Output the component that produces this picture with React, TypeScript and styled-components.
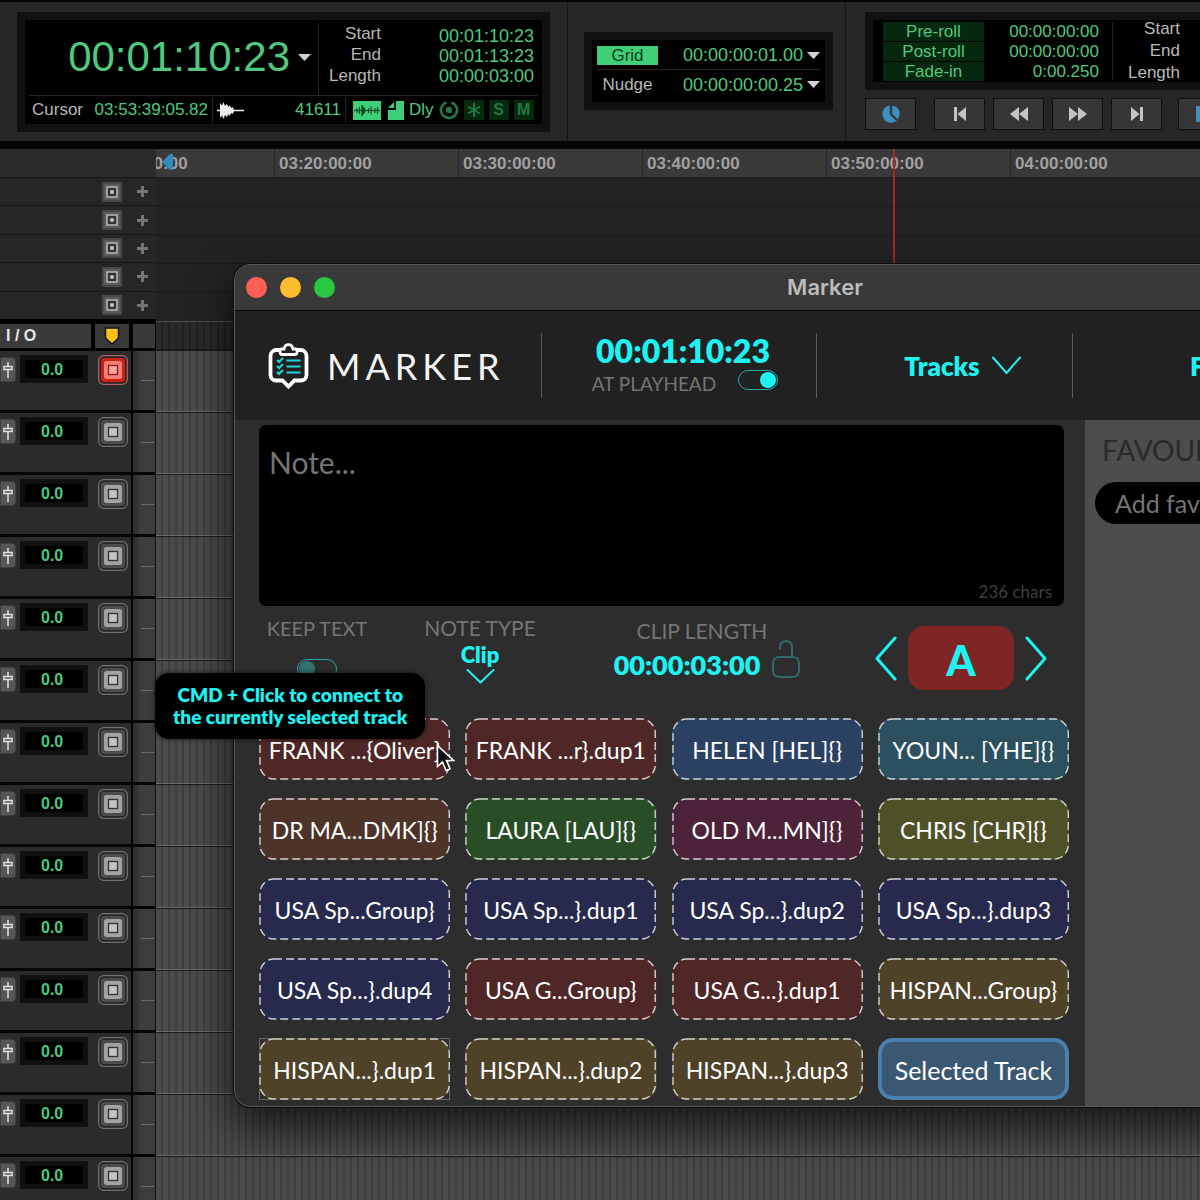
import React from "react";
import styled, { createGlobalStyle, css } from "styled-components";

const GREEN = "#4fc97e";
const CYAN = "#1df3f3";

const GlobalStyle = createGlobalStyle`
  *, *::before, *::after { box-sizing: border-box; }
  body { margin: 0; background: #000; overflow: hidden; }
  button, input, select, textarea { font: inherit; color: inherit; margin: 0; }
  button { padding: 0; border: 0; background: none; }
`;

const Page = styled.div`
  height: 100vh;
  display: flex;
  flex-direction: column;
  overflow: hidden;
  font-family: "Liberation Sans", Arial, sans-serif;
  color: #b8b8b8;
`;

/* ---------- Transport toolbar ---------- */

const Toolbar = styled.header`
  flex: none;
  display: flex;
  height: 149px;
  background: #262626;
  border-top: 2px solid #050505;
  border-bottom: 8px solid #050505;
  overflow: hidden;
`;

const ToolSection = styled.section<{ $pad: string }>`
  flex: none;
  padding: ${(p) => p.$pad};
  border-right: 1px solid #171717;
`;

const Bezel = styled.div`
  border: 8px solid #111;
  background: #000;
`;

const CounterBezel = styled(Bezel)`
  width: 533px;
  height: 120px;
  padding: 0 4px;
`;

const CounterTop = styled.div`
  display: flex;
  height: 76px;
  padding-top: 3px;
  border-bottom: 1px solid #262626;
`;

const MainCounter = styled.div`
  width: 290px;
  display: flex;
  align-items: center;
  justify-content: flex-end;
  gap: 8px;
  padding: 0 7px 4px 0;
  border-right: 1px solid #262626;
  color: ${GREEN};
  font-size: 42px;
  line-height: 48px;
`;

const DropButton = styled.button`
  display: flex;
  align-items: center;
  color: #d2d2d2;
`;

const LabelStack = styled.div<{ $width: number }>`
  width: ${(p) => p.$width}px;
  text-align: right;
  font-size: 17px;
  line-height: 21px;
`;

const ValueStack = styled.div<{ $size: number }>`
  flex: 1;
  padding-top: 3px;
  text-align: right;
  font-size: ${(p) => p.$size}px;
  line-height: 20px;
  color: ${GREEN};
`;

const StartStack = styled(ValueStack)`
  padding-right: 4px;
`;

const CounterBottom = styled.div`
  display: flex;
  align-items: center;
  height: 28px;
  padding-left: 3px;
  font-size: 17px;
  line-height: 20px;
`;

const GreenText = styled.span`
  color: ${GREEN};
`;

const CursorCell = styled.div`
  display: flex;
  justify-content: space-between;
  width: 181px;
  height: 25px;
  padding-right: 4px;
  align-items: center;
  border-right: 1px solid #262626;
`;

const SampleCell = styled(CursorCell)`
  width: 133px;
  padding-left: 4px;
`;

const FlagRow = styled.div`
  display: flex;
  align-items: center;
  gap: 7px;
  padding-left: 7px;
`;

const DelayLabel = styled.span`
  display: flex;
  align-items: center;
  gap: 5px;
  color: ${GREEN};
  margin-left: -2px;
`;

const Flag = styled.button`
  width: 20px;
  height: 20px;
  background: #06280f;
  color: #1f7a40;
  font-weight: bold;
  font-size: 16px;
  line-height: 20px;
`;

const FlagGroup = styled.div`
  display: flex;
  gap: 5px;
  margin-left: -2px;
`;

const GridBezel = styled(Bezel)`
  width: 249px;
  height: 78px;
  padding: 2px 5px;
  font-size: 17px;
  line-height: 20px;
`;

const GridRow = styled.div`
  display: flex;
  align-items: center;
  height: 26px;
  & + & {
    margin-top: 1px;
    border-top: 1px solid #262626;
    height: 30px;
  }
`;

const GridToggle = styled.button<{ $on?: boolean }>`
  width: 61px;
  height: 19px;
  line-height: 19px;
  margin-right: auto;
  color: ${(p) => (p.$on ? "#0b3a1c" : "#b8b8b8")};
  background: ${(p) => (p.$on ? "#3fcf78" : "transparent")};
  text-align: center;
`;

const GridValue = styled.span`
  color: ${GREEN};
  font-size: 18px;
  margin-right: 4px;
`;

const RollSection = styled.section`
  flex: 1;
  min-width: 0;
  padding: 10px 0 0 19px;
`;

const RollBezel = styled(Bezel)`
  width: 533px;
  height: 78px;
  display: flex;
  padding-left: 10px;
`;

const RollButtons = styled.div`
  display: flex;
  flex-direction: column;
  gap: 1px;
  width: 101px;
  padding-top: 2px;
`;

const RollButton = styled.button`
  height: 19px;
  background: #06280f;
  color: ${GREEN};
  font-size: 17px;
  line-height: 19px;
`;

const RollValues = styled.div`
  width: 129px;
  margin: 2px 0;
  padding-right: 13px;
  border-right: 1px solid #262626;
  text-align: right;
  color: ${GREEN};
  font-size: 17px;
  line-height: 20px;
`;

const RollLabels = styled(LabelStack)`
  margin-top: -2px;
  line-height: 22px;
`;

const TransportRow = styled.div`
  display: flex;
  gap: 8px;
  margin-top: 8px;
`;

const TransportButton = styled.button<{ $group?: boolean }>`
  flex: none;
  display: flex;
  align-items: center;
  justify-content: center;
  width: 51px;
  height: 32px;
  background: #363636;
  border: 1px solid #101010;
  color: ${(p) => (p.$group ? "#3d8fc0" : "#c4c4c4")};
  margin-right: ${(p) => (p.$group ? 10 : 0)}px;
`;

/* ---------- Workspace ---------- */

const Workspace = styled.main`
  flex: 1;
  min-height: 0;
  position: relative;
  display: flex;
  overflow: hidden;
`;

const Sidebar = styled.aside`
  flex: none;
  width: 156px;
  background: #000;
`;

const RulerHead = styled.div`
  height: 28px;
  background: #2b2b2b;
`;

const MarkerRows = styled.div`
  display: grid;
  grid-template-rows: repeat(5, 1fr);
  height: 144px;
  padding-bottom: 2px;
`;

const MarkerRow = styled.div`
  display: flex;
  align-items: center;
  justify-content: flex-end;
  gap: 15px;
  padding-right: 8px;
  background: #262626;
  border-top: 1px solid #171717;
`;

const IconButton = styled.button`
  display: block;
  line-height: 0;
`;

const ColumnHead = styled.div`
  display: flex;
  gap: 4px;
  height: 30px;
  padding: 3px 1px 3px 0;
`;

const HeadCell = styled.div<{ $width: number }>`
  width: ${(p) => p.$width}px;
  display: flex;
  align-items: center;
  justify-content: center;
  background: #3a3a3a;
  color: #e6e6e6;
  font-weight: bold;
  font-size: 16px;
  line-height: 20px;
`;

const IoCell = styled(HeadCell)`
  justify-content: flex-start;
  padding-left: 6px;
`;

const TrackRow = styled.div`
  display: flex;
  height: 62px;
  border-bottom: 3px solid #050505;
  background: #2b2b2b;
`;

const FaderButton = styled.button`
  width: 16px;
  height: 25px;
  margin-top: 6px;
  display: flex;
  align-items: center;
  justify-content: center;
  background: #565656;
  border: 1px solid #3f3f3f;
  border-radius: 0 4px 4px 0;
  color: #e2e2e2;
`;

const VolumeBox = styled.div`
  width: 68px;
  height: 28px;
  margin: 4px 10px 0 4px;
  border: 5px solid #101010;
  background: #000;
  color: ${GREEN};
  font-weight: bold;
  font-size: 16px;
  line-height: 20px;
  padding-left: 16px;
`;

const TrackTarget = styled.div`
  width: 33px;
  padding-top: 4px;
`;

const TrackEdge = styled.div`
  flex: 1;
  border-left: 2px solid #050505;
  border-right: 1px solid #111;
  background: linear-gradient(90deg, #2c2c2c, #3d3d3d 8px);
  padding: 29px 1px 0 8px;
`;

const EdgeLine = styled.div`
  height: 1px;
  background: #6a6a6a;
`;

const Timeline = styled.section`
  position: relative;
  flex: 1;
  min-width: 0;
  overflow: hidden;
`;

const Ruler = styled.div`
  display: flex;
  height: 28px;
  background: #393939;
  overflow: hidden;
`;

const RulerMark = styled.div`
  flex: none;
  width: 184px;
  padding-left: 4px;
  border-left: 1px solid #262626;
  color: #a0a0a0;
  font-weight: bold;
  font-size: 17px;
  line-height: 30px;
  &:first-child {
    margin-left: -66px;
  }
`;

const LaneRows = styled.div`
  display: grid;
  grid-template-rows: repeat(5, 1fr);
  height: 144px;
`;

const Lane = styled.div`
  background: #232323;
  border-top: 1px solid #1b1b1b;
`;

const stripes = (base: string, line: string) => css`
  background: repeating-linear-gradient(90deg, ${base} 0 5px, ${line} 5px 7px);
`;

const LaneHead = styled.div`
  height: 29px;
  border-top: 1px solid #4c4c4c;
  border-bottom: 1px solid #1a1a1a;
  ${stripes("#2a2a2a", "#212121")}
`;

const TrackLane = styled.div`
  height: 62px;
  border-top: 1px solid #191919;
  border-bottom: 1px solid #6a6a6a;
  ${stripes("#4b4b4b", "#3e3e3e")}
`;

const StartMarker = styled.svg`
  position: absolute;
  left: 6px;
  top: 5px;
`;

const Playhead = styled.div`
  position: absolute;
  left: 737px;
  top: 0;
  height: 172px;
  width: 2px;
  background: #a32a22;
`;

/* ---------- Marker window ---------- */

const Window = styled.section`
  position: absolute;
  left: 234px;
  right: -216px;
  top: 115px;
  border: 1px solid #5a5a5a;
  border-radius: 16px;
  background: #2d2d2d;
  overflow: hidden;
  box-shadow: 0 0 0 1px #0c0c0c, 0 18px 40px 4px rgba(0, 0, 0, 0.65);
  font-family: Lato, "Liberation Sans", sans-serif;
`;

const TitleBar = styled.div`
  display: flex;
  align-items: center;
  gap: 13px;
  height: 46px;
  padding-left: 11px;
  background: #393939;
  border-bottom: 1px solid #0c0c0c;
`;

const Light = styled.button<{ $color: string }>`
  width: 21px;
  height: 21px;
  border-radius: 50%;
  background: ${(p) => p.$color};
`;

const WindowTitle = styled.h1`
  flex: 1;
  margin: 0;
  padding: 0 113px 2px 0;
  text-align: center;
  color: #bcbcbc;
  font-family: Inter, "Liberation Sans", sans-serif;
  font-weight: 600;
  font-size: 22px;
  line-height: 28px;
`;

const WindowHeader = styled.div`
  display: flex;
  height: 109px;
  background: #212121;
`;

const HeaderCell = styled.div<{ $width: number }>`
  flex: none;
  width: ${(p) => p.$width}px;
  display: flex;
  align-items: center;
  justify-content: center;
`;

const TracksCell = styled(HeaderCell)`
  padding-left: 36px;
`;

const FilterCell = styled(HeaderCell)`
  justify-content: flex-start;
  padding-left: 117px;
`;

const Rule = styled.div`
  flex: none;
  align-self: flex-start;
  width: 1px;
  height: 65px;
  margin-top: 22px;
  background: #5a5a5a;
`;

const Brand = styled(HeaderCell)`
  justify-content: flex-start;
  gap: 18px;
  padding-left: 33px;
  color: #f4f4f4;
  font-weight: 400;
  font-size: 36px;
  line-height: 44px;
`;

const BrandName = styled.span`
  letter-spacing: 5px;
`;

const PlayheadInfo = styled(HeaderCell)`
  flex-direction: column;
  justify-content: flex-start;
  padding-top: 21px;
`;

const BigTime = styled.div`
  color: ${CYAN};
  font-weight: 800;
  font-size: 32px;
  line-height: 38px;
  padding-left: 8px;
`;

const PlayheadToggle = styled.label`
  display: flex;
  gap: 22px;
  padding-left: 12px;
  color: #757575;
  font-size: 19px;
  line-height: 28px;
`;

const Switch = styled.input.attrs({ type: "checkbox" })`
  appearance: none;
  flex: none;
  width: 40px;
  height: 20px;
  border: 1px solid #2aa5a7;
  border-radius: 10px;
  display: flex;
  align-items: center;
  padding: 1px;
  &::before {
    content: "";
    width: 16px;
    height: 16px;
    border-radius: 50%;
    background: #34706f;
  }
  &:checked::before {
    margin-left: auto;
    background: ${CYAN};
  }
`;

const MenuSelect = styled.select`
  appearance: none;
  field-sizing: content;
  border: 0;
  padding: 0;
  background: transparent;
  color: ${CYAN};
  font-weight: 800;
  text-align-last: center;
`;

const HeaderMenu = styled.label`
  display: flex;
  align-items: center;
  gap: 12px;
  color: ${CYAN};
  font-size: 26px;
  line-height: 32px;
`;

const WindowBody = styled.div`
  display: flex;
  height: 686px;
`;

const NotePane = styled.div`
  flex: none;
  width: 850px;
  padding: 5px 16px 0 24px;
`;

const NoteBox = styled.div`
  position: relative;
  height: 181px;
  margin-right: 5px;
`;

const NoteInput = styled.textarea`
  display: block;
  width: 100%;
  height: 100%;
  resize: none;
  border: 0;
  border-radius: 7px;
  background: #000;
  color: #ddd;
  padding: 19px 10px;
  font-size: 30px;
  line-height: 36px;
  &::placeholder {
    color: #757575;
    opacity: 1;
  }
`;

const CharCount = styled.span`
  position: absolute;
  right: 12px;
  bottom: 3px;
  color: #3f3f3f;
  font-size: 17px;
  line-height: 22px;
`;

const Controls = styled.div`
  display: grid;
  grid-template-columns: 116fr 210fr 234fr 250fr;
  height: 112px;
`;

const Control = styled.div`
  display: flex;
  flex-direction: column;
  align-items: center;
  padding-top: 9px;
  color: #757575;
  font-size: 21px;
  line-height: 26px;
`;

const KeepControl = styled.label`
  display: flex;
  flex-direction: column;
  align-items: center;
  gap: 18px;
  padding-top: 9px;
  color: #757575;
  font-size: 20px;
  line-height: 26px;
`;

const TypeMenu = styled(MenuSelect)`
  font-size: 22px;
  line-height: 28px;
`;

const ClipControl = styled(Control)`
  padding-top: 12px;
`;

const ClipRow = styled.div`
  display: flex;
  align-items: flex-end;
  gap: 12px;
  margin-top: -4px;
  padding-left: 10px;
`;

const ClipTime = styled.div`
  color: ${CYAN};
  font-weight: 800;
  font-size: 27px;
  line-height: 26px;
`;

const PageNav = styled.div`
  display: flex;
  align-items: center;
  justify-content: flex-end;
  gap: 11px;
  height: 64px;
  margin-top: 20px;
  padding-right: 22px;
  color: ${CYAN};
`;

const PageButton = styled.button`
  width: 106px;
  height: 64px;
  border-radius: 16px;
  background: #802526;
  padding-top: 4px;
  font-weight: 900;
  font-size: 42px;
  line-height: 60px;
`;

const PadGrid = styled.div`
  display: grid;
  grid-template-columns: repeat(4, 1fr);
  gap: 18px 15px;
`;

const Pad = styled.button<{ $bg: string }>`
  position: relative;
  height: 62px;
  padding-top: 2px;
  border-radius: 15px;
  background: ${(p) => p.$bg};
  color: #fff;
  font-size: 23px;
  line-height: 30px;
  white-space: nowrap;
`;

const FocusFrame = styled.div`
  display: grid;
  outline: 1px solid #666;
  outline-offset: -1px;
`;

const SelectedPad = styled(Pad)`
  border: 4px solid #4a7fae;
  font-size: 25px;
`;

const DashSvg = styled.svg`
  position: absolute;
  inset: 0;
  width: 100%;
  height: 100%;
  rect {
    x: 1px;
    y: 1px;
    width: calc(100% - 2px);
    height: calc(100% - 2px);
    rx: 14px;
    fill: none;
    stroke: #cfcfcf;
    stroke-width: 1.4;
    stroke-dasharray: 8 4;
  }
`;

const Favourites = styled.aside`
  flex: 1;
  background: #4d4d4d;
  padding: 12px 10px 0;
`;

const FavTitle = styled.h2`
  margin: 0 0 14px 7px;
  color: #2a2a2a;
  font-weight: 400;
  font-size: 28px;
  line-height: 36px;
`;

const FavInput = styled.input`
  display: block;
  width: 100%;
  height: 42px;
  border: 0;
  border-radius: 21px;
  background: #000;
  padding: 0 20px;
  font-size: 25px;
  color: #ddd;
  &::placeholder {
    color: #757575;
    opacity: 1;
  }
`;

const Tooltip = styled.div`
  position: absolute;
  left: 155px;
  top: 524px;
  padding: 11px 18px;
  border-radius: 14px;
  background: #000;
  box-shadow: 0 0 5px rgba(0, 0, 0, 0.6);
  color: ${CYAN};
  font-family: Lato, "Liberation Sans", sans-serif;
  font-weight: 800;
  font-size: 19px;
  line-height: 22px;
  text-align: center;
  white-space: nowrap;
`;

const Pointer = styled.svg`
  position: absolute;
  left: 436px;
  top: 595px;
`;

/* ---------- Drawings ---------- */

const Caret = () => (
  <svg width="13" height="7" viewBox="0 0 13 7"><path d="M0 0h13L6.500 7z" fill="#d2d2d2" /></svg>
);

const Waveform = () => (
  <svg width="27" height="17" viewBox="0 0 27 17" fill="#ececec">
    <path d="M0 7.700h3V1l2 2.500L6.500 0l1.500 4L10 2l1.500 3 1.500-2 1 3 1.500-1 1.500 2.700h10v1.600H17l-1.500 2.700-1.500-1-1 3-1.500-2-1.500 3L8 13l-1.500 4L5 13.500 3 16V9.300H0z" />
  </svg>
);

const WaveBlock = () => (
  <svg width="28" height="19" viewBox="0 0 28 19">
    <rect width="28" height="19" fill="#3fcf78" />
    <path d="M1 9.500h26" stroke="#0c4a22" strokeWidth="1.200" />
    <path d="M4 7v5M6.500 6v7M9 4v11M11 6v7M15.500 7v5M18 5.500v8M22 7v5M24.500 6v7" stroke="#0c4a22" strokeWidth="1.100" fill="none" />
    <path d="M9 4l4 5.500L9 15z" fill="#0c4a22" />
  </svg>
);

const PageCorner = () => (
  <svg width="16" height="19" viewBox="0 0 16 19">
    <path d="M8 0h8v19H0V9h8z" fill="#3fcf78" />
    <path d="M6 1v6H0z" fill="#3fcf78" />
  </svg>
);

const Dial = () => (
  <svg width="20" height="20" viewBox="0 0 20 20" fill="none" stroke="#1f7a40">
    <path d="M12.500 2.500a8 8 0 1 1-5 0" strokeWidth="2.600" />
    <circle cx="10" cy="10" r="3.200" fill="#1f7a40" stroke="none" />
  </svg>
);

const StarSvg = styled.svg`
  display: block;
  margin: 0 auto;
`;

const Star = () => (
  <StarSvg width="16" height="16" viewBox="0 0 16 16" stroke="currentColor" strokeWidth="2">
    <path d="M8 1v14M2 4.500l12 7M14 4.500l-12 7" />
  </StarSvg>
);

const Plus = () => (
  <svg width="11" height="11" viewBox="0 0 11 11"><path d="M4 0h3v4h4v3H7v4H4V7H0V4h4z" fill="#757575" /></svg>
);

const SmallTarget = () => (
  <svg width="20" height="20" viewBox="0 0 20 20">
    <rect width="20" height="20" fill="#474747" />
    <rect x="2" y="2" width="16" height="16" fill="#5a5a5a" />
    <rect x="5" y="5" width="10" height="10" fill="#333" stroke="#b5b5b5" strokeWidth="1.600" />
    <rect x="8.300" y="8.300" width="3.400" height="3.400" fill="#d0d0d0" />
  </svg>
);

const BigTarget = ({ hot }: { hot?: boolean }) => (
  <svg width="30" height="30" viewBox="0 0 30 30">
    <rect x="0.700" y="0.700" width="28.600" height="28.600" rx="5" fill="#262626" stroke={hot ? "#a66" : "#707070"} strokeWidth="1.300" />
    <rect x="3" y="3" width="24" height="24" rx="3" fill={hot ? "#cf2018" : "#4c4c4c"} />
    <rect x="6" y="6" width="18" height="18" rx="2.500" fill={hot ? "#f5807a" : "#a2a2a2"} />
    <rect x="10.500" y="10.500" width="9" height="9" fill={hot ? "#f7aaa5" : "#c4c4c4"} stroke={hot ? "#8f1813" : "#333"} strokeWidth="1.300" />
  </svg>
);

const Fader = () => (
  <svg width="10" height="16" viewBox="0 0 10 16" fill="none" stroke="currentColor" strokeWidth="1.500">
    <path d="M5 0v4M5 8v8M1 4.500h8v3H1z" />
  </svg>
);

const Shield = () => (
  <svg width="16" height="18" viewBox="0 0 16 18"><path d="M1.500 1h13v10L8 17 1.500 11z" fill="#fcc21b" stroke="#111" strokeWidth="1.500" /></svg>
);

const Logo = () => (
  <svg width="41" height="48" viewBox="0 0 41 48" fill="none">
    <path d="M12 8H8.500A6 6 0 0 0 2.500 14v19a5.500 5.500 0 0 0 5.500 5.500h6.500l6 6 6-6H33a5.500 5.500 0 0 0 5.500-5.500V14a6 6 0 0 0-6-6H29" stroke="#fff" strokeWidth="3.800" />
    <path d="M12 8.500c0-1 .6-1.500 1.500-1.500H16c.6-2.800 2-4.300 4.500-4.300S24.400 4.200 25 7h2.500c.9 0 1.500.5 1.500 1.500V10a2.500 2.500 0 0 1-2.500 2.500h-12A2.500 2.500 0 0 1 12 10z" stroke="#fff" strokeWidth="2.800" />
    <path d="M9 18l2 2 4-4M9 24l2 2 4-4M9 30l2 2 4-4M18.500 18.500h14M18.500 24.500h14M18.500 30.500h14" stroke="#1fd5da" strokeWidth="2.200" />
  </svg>
);

const Chevron = ({ w, h, d, sw = 2 }: { w: number; h: number; d: string; sw?: number }) => (
  <svg width={w} height={h} viewBox={`0 0 ${w} ${h}`} fill="none" stroke={CYAN} strokeWidth={sw} strokeLinecap="round" strokeLinejoin="round">
    <path d={d} />
  </svg>
);

const Unlock = () => (
  <svg width="28" height="38" viewBox="0 0 28 38" fill="none" stroke="#32686a" strokeWidth="2" strokeLinecap="round">
    <rect x="1" y="17" width="26" height="20" rx="6" />
    <path d="M8 9V7a6 6 0 0 1 12 0v10" />
  </svg>
);

const Dashes = () => (
  <DashSvg aria-hidden="true"><rect /></DashSvg>
);

/* ---------- Data ---------- */

const RED = "#4e2726";
const BROWN = "#4d3328";
const NAVY = "#272a4c";
const OLIVE = "#4e4228";

const pads: [string, string][] = [
  ["FRANK ...{Oliver}", RED],
  ["FRANK ...r}.dup1", RED],
  ["HELEN [HEL]{}", "#2a4162"],
  ["YOUN... [YHE]{}", "#2c505f"],
  ["DR MA...DMK]{}", BROWN],
  ["LAURA [LAU]{}", "#284d27"],
  ["OLD M...MN]{}", "#4c2339"],
  ["CHRIS [CHR]{}", "#4e5128"],
  ["USA Sp...Group}", NAVY],
  ["USA Sp...}.dup1", NAVY],
  ["USA Sp...}.dup2", NAVY],
  ["USA Sp...}.dup3", NAVY],
  ["USA Sp...}.dup4", NAVY],
  ["USA G...Group}", RED],
  ["USA G...}.dup1", RED],
  ["HISPAN...Group}", OLIVE],
];

const lastPads: [string, string][] = [
  ["HISPAN...}.dup2", OLIVE],
  ["HISPAN...}.dup3", OLIVE],
];

const rulerLabels = ["03:10:00:00", "03:20:00:00", "03:30:00:00", "03:40:00:00", "03:50:00:00", "04:00:00:00"];
const lanes = [0, 1, 2, 3, 4];
const tracks = Array.from({ length: 14 }, (_, i) => i);

const transport = [
  { name: "Return to start", d: "M3 1h3v14H3zM15 1v14L6.500 8z" },
  { name: "Rewind", d: "M9 1v14L0 8zM18 1v14L9 8z" },
  { name: "Fast forward", d: "M0 1v14l9-7zM9 1v14l9-7z" },
  { name: "Go to end", d: "M3 1v14l8.500-7zM12 1h3v14h-3z" },
];

const TopBar = () => (
  <Toolbar>
    <ToolSection $pad="10px 17px 0">
      <CounterBezel>
        <CounterTop>
          <MainCounter>
            <span>00:01:10:23</span>
            <DropButton aria-label="Counter format"><Caret /></DropButton>
          </MainCounter>
          <LabelStack $width={62}>
            <div>Start</div>
            <div>End</div>
            <div>Length</div>
          </LabelStack>
          <StartStack $size={18}>
            <div>00:01:10:23</div>
            <div>00:01:13:23</div>
            <div>00:00:03:00</div>
          </StartStack>
        </CounterTop>
        <CounterBottom>
          <CursorCell>
            <span>Cursor</span>
            <GreenText>03:53:39:05.82</GreenText>
          </CursorCell>
          <SampleCell>
            <Waveform />
            <GreenText>41611</GreenText>
          </SampleCell>
          <FlagRow>
            <WaveBlock />
            <PageCorner />
            <DelayLabel>Dly <Dial /></DelayLabel>
            <FlagGroup>
              <Flag aria-label="Star"><Star /></Flag>
              <Flag>S</Flag>
              <Flag>M</Flag>
            </FlagGroup>
          </FlagRow>
        </CounterBottom>
      </CounterBezel>
    </ToolSection>
    <ToolSection $pad="30px 12px 0 16px">
      <GridBezel>
        <GridRow>
          <GridToggle $on>Grid</GridToggle>
          <GridValue>00:00:00:01.00</GridValue>
          <DropButton aria-label="Grid value"><Caret /></DropButton>
        </GridRow>
        <GridRow>
          <GridToggle>Nudge</GridToggle>
          <GridValue>00:00:00:00.25</GridValue>
          <DropButton aria-label="Nudge value"><Caret /></DropButton>
        </GridRow>
      </GridBezel>
    </ToolSection>
    <RollSection>
      <RollBezel>
        <RollButtons>
          <RollButton>Pre-roll</RollButton>
          <RollButton>Post-roll</RollButton>
          <RollButton>Fade-in</RollButton>
        </RollButtons>
        <RollValues>
          <div>00:00:00:00</div>
          <div>00:00:00:00</div>
          <div>0:00.250</div>
        </RollValues>
        <RollLabels $width={67}>
          <div>Start</div>
          <div>End</div>
          <div>Length</div>
        </RollLabels>
      </RollBezel>
      <TransportRow>
        <TransportButton $group aria-label="Playback mode">
          <svg width="18" height="18" viewBox="0 0 18 18">
            <circle cx="9" cy="9" r="8.700" fill="currentColor" />
            <path d="M9 0v9l6 6" stroke="#363636" strokeWidth="2.400" fill="none" />
          </svg>
        </TransportButton>
        {transport.map((b) => (
          <TransportButton key={b.name} aria-label={b.name}>
            <svg width="18" height="16" viewBox="0 0 18 16"><path d={b.d} fill="currentColor" /></svg>
          </TransportButton>
        ))}
        <div />
        <TransportButton $group aria-label="Stop">
          <svg width="16" height="16" viewBox="0 0 16 16"><rect width="16" height="16" fill="currentColor" /></svg>
        </TransportButton>
      </TransportRow>
    </RollSection>
  </Toolbar>
);

const MarkerWindow = () => (
  <Window aria-label="Marker">
    <TitleBar>
      <Light $color="#fe5f57" aria-label="Close" />
      <Light $color="#febc2e" aria-label="Minimise" />
      <Light $color="#28c840" aria-label="Zoom" />
      <WindowTitle>Marker</WindowTitle>
    </TitleBar>
    <WindowHeader>
      <Brand $width={306}>
        <Logo />
        <BrandName>MARKER</BrandName>
      </Brand>
      <Rule />
      <PlayheadInfo $width={274}>
        <BigTime>00:01:10:23</BigTime>
        <PlayheadToggle>
          AT PLAYHEAD
          <Switch defaultChecked />
        </PlayheadToggle>
      </PlayheadInfo>
      <Rule />
      <TracksCell $width={255}>
        <HeaderMenu>
          <MenuSelect aria-label="Marker target"><option>Tracks</option></MenuSelect>
          <Chevron w={29} h={19} d="M1 1.500L14.500 17 28 1.500" />
        </HeaderMenu>
      </TracksCell>
      <Rule />
      <FilterCell $width={312}>
        <HeaderMenu>
          <MenuSelect aria-label="Filter"><option>Filter</option></MenuSelect>
        </HeaderMenu>
      </FilterCell>
    </WindowHeader>
    <WindowBody>
      <NotePane>
        <NoteBox>
          <NoteInput aria-label="Note" placeholder="Note..." />
          <CharCount>236 chars</CharCount>
        </NoteBox>
        <Controls>
          <KeepControl>
            KEEP TEXT
            <Switch />
          </KeepControl>
          <Control>
            <label htmlFor="note-type">NOTE TYPE</label>
            <TypeMenu id="note-type"><option>Clip</option></TypeMenu>
            <Chevron w={29} h={15} d="M1.500 1L14.500 13.500 27.500 1" />
          </Control>
          <ClipControl>
            <span>CLIP LENGTH</span>
            <ClipRow>
              <ClipTime>00:00:03:00</ClipTime>
              <IconButton aria-label="Unlock clip length"><Unlock /></IconButton>
            </ClipRow>
          </ClipControl>
          <PageNav>
            <IconButton aria-label="Previous page"><Chevron w={22} h={45} sw={3} d="M20 2L2 22.500 20 43" /></IconButton>
            <PageButton>A</PageButton>
            <IconButton aria-label="Next page"><Chevron w={22} h={45} sw={3} d="M2 2l18 20.500L2 43" /></IconButton>
          </PageNav>
        </Controls>
        <PadGrid>
          {pads.map(([label, color]) => (
            <Pad key={label} $bg={color}><Dashes />{label}</Pad>
          ))}
          <FocusFrame>
            <Pad $bg={OLIVE}><Dashes />HISPAN...&#125;.dup1</Pad>
          </FocusFrame>
          {lastPads.map(([label, color]) => (
            <Pad key={label} $bg={color}><Dashes />{label}</Pad>
          ))}
          <SelectedPad $bg="#3a5871">Selected Track</SelectedPad>
        </PadGrid>
      </NotePane>
      <Favourites>
        <FavTitle>FAVOURITES</FavTitle>
        <FavInput aria-label="Add favourite" placeholder="Add favourite..." />
      </Favourites>
    </WindowBody>
  </Window>
);

export default function App() {
  return (
    <Page>
      <GlobalStyle />
      <TopBar />
      <Workspace>
        <Sidebar>
          <RulerHead />
          <MarkerRows>
            {lanes.map((n) => (
              <MarkerRow key={n}>
                <IconButton aria-label="Marker lane target"><SmallTarget /></IconButton>
                <IconButton aria-label="Add marker"><Plus /></IconButton>
              </MarkerRow>
            ))}
          </MarkerRows>
          <ColumnHead>
            <IoCell $width={92}>I / O</IoCell>
            <HeadCell $width={34}><Shield /></HeadCell>
            <HeadCell $width={22} />
          </ColumnHead>
          {tracks.map((n) => (
            <TrackRow key={n}>
              <FaderButton aria-label="Output fader"><Fader /></FaderButton>
              <VolumeBox>0.0</VolumeBox>
              <TrackTarget>
                <IconButton aria-label="Track marker target"><BigTarget hot={n === 0} /></IconButton>
              </TrackTarget>
              <TrackEdge><EdgeLine /></TrackEdge>
            </TrackRow>
          ))}
        </Sidebar>
        <Timeline>
          <Ruler>
            {rulerLabels.map((t) => <RulerMark key={t}>{t}</RulerMark>)}
          </Ruler>
          <LaneRows>
            {lanes.map((n) => <Lane key={n} />)}
          </LaneRows>
          <LaneHead />
          {tracks.map((n) => <TrackLane key={n} />)}
          <StartMarker width="13" height="16" viewBox="0 0 13 16"><path d="M0 8l8-8h3v16H8z" fill="#2f8ac4" /></StartMarker>
          <Playhead />
        </Timeline>
        <MarkerWindow />
        <Tooltip role="tooltip">
          CMD + Click to connect to
          <br />
          the currently selected track
        </Tooltip>
        <Pointer width="20" height="30" viewBox="0 0 20 30">
          <path d="M1.500 1.500v21l5-4.500 3.500 8.500 4-1.700-3.500-8.300h7z" fill="#111" stroke="#fff" strokeWidth="1.600" />
        </Pointer>
      </Workspace>
    </Page>
  );
}
